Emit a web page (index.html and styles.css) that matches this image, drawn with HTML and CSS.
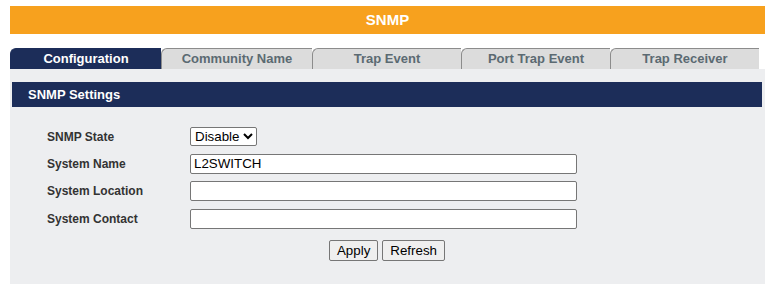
FILE: index.html
```html
<!DOCTYPE html>
<html>
<head>
<meta charset="utf-8">
<link rel="stylesheet" href="styles.css">
</head>
<body>
<div class="page">
  <div class="title">SNMP</div>
  <div class="tabs">
    <div class="tab active w151">Configuration</div>
    <div class="tab w151">Community Name</div>
    <div class="tab w149">Trap Event</div>
    <div class="tab w149">Port Trap Event</div>
    <div class="tab w149">Trap Receiver</div>
  </div>
  <div class="panel">
    <div class="panel-head">SNMP Settings</div>
    <div class="form">
      <div class="label">SNMP State</div>
      <div class="ctl"><select class="sel"><option>Disable</option><option>Enable</option></select></div>
      <div class="label">System Name</div>
      <div class="ctl"><input class="txt" type="text" value="L2SWITCH"></div>
      <div class="label">System Location</div>
      <div class="ctl"><input class="txt" type="text" value=""></div>
      <div class="label">System Contact</div>
      <div class="ctl"><input class="txt" type="text" value=""></div>
    </div>
    <div class="buttons">
      <button class="btn">Apply</button>
      <button class="btn">Refresh</button>
    </div>
  </div>
</div>
</body>
</html>
```
FILE: styles.css
```css
html, body {
  margin: 0;
  padding: 0;
  background: #ffffff;
  font-family: "Liberation Sans", Arial, sans-serif;
}
.page {
  padding: 6px 10px 0 10px;
  width: 755px;
}
.title {
  height: 28px;
  line-height: 28px;
  background: #f7a11e;
  color: #ffffff;
  font-weight: bold;
  font-size: 15px;
  text-align: center;
}
.tabs {
  display: flex;
  margin-top: 14px;
  height: 21px;
}
.tab {
  box-sizing: border-box;
  height: 21px;
  line-height: 20px;
  font-size: 13px;
  font-weight: bold;
  color: #5b6a72;
  background: #dcdcdc;
  text-align: center;
  border-top: 1px solid #8c8c8c;
  border-left: 1px solid #8c8c8c;
  border-top-left-radius: 6px;
}
.tab.active {
  background: #1c2d59;
  color: #ffffff;
  border-color: #1c2d59;
}
.w151 { width: 151px; }
.w149 { width: 149px; }
.panel {
  background: #edeef0;
  padding: 13px 3px 23px 2px;
}
.panel-head {
  height: 25px;
  line-height: 25px;
  background: #1c2d59;
  color: #ffffff;
  font-size: 13px;
  font-weight: bold;
  padding-left: 16px;
}
.form {
  display: grid;
  grid-template-columns: 143px 387px;
  grid-template-rows: 27px 27px 28px 28px;
  align-items: center;
  margin: 16px 0 0 35px;
}
.label {
  font-size: 12px;
  font-weight: bold;
  color: #333333;
}
.ctl {
  display: flex;
  align-items: center;
}
.sel {
  font-family: "Liberation Sans", Arial, sans-serif;
  font-size: 13.33px;
  height: 19px;
  padding: 0;
  border: 1px solid #767676;
  border-radius: 2px;
  background: #ffffff;
  color: #000000;
}
.txt {
  box-sizing: border-box;
  width: 387px;
  height: 20px;
  margin: 0;
  padding: 1px 3px;
  border: 1px solid #767676;
  border-radius: 2px;
  font-family: "Liberation Sans", Arial, sans-serif;
  font-size: 13.33px;
  color: #000000;
  background: #ffffff;
}
.buttons {
  display: flex;
  justify-content: center;
  gap: 4px;
  margin-top: 7px;
}
.btn {
  box-sizing: border-box;
  height: 21px;
  margin: 0;
  padding: 1px 7px;
  font-family: "Liberation Sans", Arial, sans-serif;
  font-size: 13.33px;
  color: #000000;
  background: #efefef;
  border: 1px solid #767676;
  border-radius: 2px;
}
```
